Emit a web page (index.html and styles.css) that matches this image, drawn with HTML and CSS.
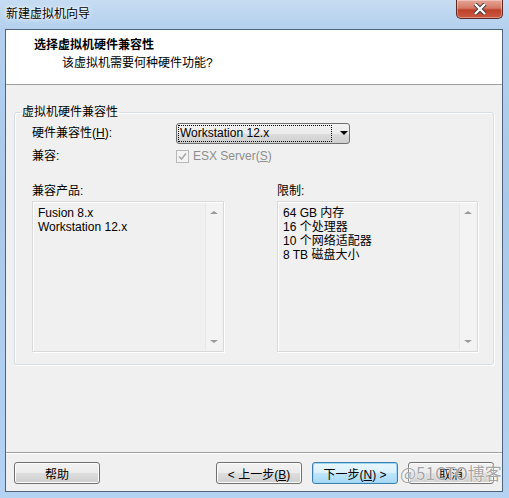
FILE: index.html
```html
<!DOCTYPE html>
<html lang="zh-CN">
<head>
  <meta charset="UTF-8">
  <title>新建虚拟机向导</title>
  <link rel="stylesheet" href="styles.css">
</head>
<body>
  <div class="window">
    <div class="titlebar">
      <span class="title">新建虚拟机向导</span>
      <div class="close">
        <svg width="18" height="12" viewBox="0 0 18 12">
          <path d="M4 1 L14 11 M14 1 L4 11" fill="none" stroke="#3a3a3a" stroke-width="4.2"/>
          <path d="M4 1 L14 11 M14 1 L4 11" fill="none" stroke="#fff" stroke-width="2.4"/>
        </svg>
      </div>
    </div>

    <div class="client">
      <div class="header">
        <div class="head-title">选择虚拟机硬件兼容性</div>
        <div class="head-sub">该虚拟机需要何种硬件功能?</div>
      </div>

      <div class="content">
        <fieldset class="group">
          <legend>虚拟机硬件兼容性</legend>
          <div class="row">
            <span class="label">硬件兼容性(<u>H</u>):</span>
            <div class="combo">
              <span class="combo-text">Workstation 12.x</span>
              <span class="combo-arrow"></span>
            </div>
          </div>
          <div class="row row-check">
            <span class="label">兼容:</span>
            <span class="check">
              <svg width="9" height="9" viewBox="0 0 9 9"><path d="M1 4.5 L3.5 7 L8 1.5" fill="none" stroke="#a9a9a9" stroke-width="1.6"/></svg>
            </span>
            <span class="check-text">ESX Server(<u>S</u>)</span>
          </div>
          <div class="lists">
            <div class="list-col">
              <span class="label">兼容产品:</span>
              <div class="listbox list-left">
                <div class="items">
                  <div>Fusion 8.x</div>
                  <div>Workstation 12.x</div>
                </div>
                <div class="scroll">
                  <span class="arr up"></span>
                  <span class="arr down"></span>
                </div>
              </div>
            </div>
            <div class="list-col">
              <span class="label">限制:</span>
              <div class="listbox list-right">
                <div class="items">
                  <div>64 GB 内存</div>
                  <div>16 个处理器</div>
                  <div>10 个网络适配器</div>
                  <div>8 TB 磁盘大小</div>
                </div>
                <div class="scroll">
                  <span class="arr up"></span>
                  <span class="arr down"></span>
                </div>
              </div>
            </div>
          </div>
        </fieldset>
      </div>

      <div class="footer">
        <button class="btn">帮助</button>
        <span class="spacer"></span>
        <button class="btn">&lt; 上一步(<u>B</u>)</button>
        <button class="btn btn-default">下一步(<u>N</u>) &gt;</button>
        <button class="btn">取消</button>
      </div>
    </div>
    <div class="watermark">@51CTO博客</div>
  </div>
</body>
</html>
```

FILE: styles.css
```css
body {
  margin: 0;
  font-family: "Liberation Sans", "Noto Sans CJK SC", sans-serif;
  font-size: 12px;
  color: #000;
}

.window {
  position: relative;
  width: 509px;
  height: 498px;
  box-sizing: border-box;
  padding: 0 6px 6px 5px;
  display: flex;
  flex-direction: column;
  background: linear-gradient(180deg, #c6dcf2 0%, #b3d0ee 6%, #a9c9ea 40%, #b4d3f2 100%);
}

.titlebar {
  height: 29px;
  display: flex;
  align-items: flex-start;
}
.title {
  margin: 6px 0 0 1px;
  line-height: 16px;
  text-shadow: 0 0 6px #fff, 0 0 3px #fff;
}
.close {
  margin-left: auto;
  width: 45px;
  height: 18px;
  border: 1px solid #5b2a24;
  border-top: none;
  border-radius: 0 0 5px 5px;
  background: linear-gradient(180deg, #e6a596 0%, #d47a66 45%, #c0412b 55%, #c85a3f 100%);
  box-shadow: inset 0 0 0 1px rgba(255,255,255,0.35);
  display: flex;
  align-items: center;
  justify-content: center;
}

.client {
  flex: 1;
  display: flex;
  flex-direction: column;
  background: #f0f0f0;
  border: 1px solid #4f647a;
}

.header {
  height: 55px;
  background: #fff;
  border-bottom: 1px solid #a0a0a0;
  box-sizing: border-box;
  padding: 7px 0 0 28px;
}
.head-title {
  font-weight: bold;
  line-height: 16px;
}
.head-sub {
  margin: 2px 0 0 28px;
  line-height: 16px;
}

.content {
  flex: 1;
  padding: 19px 9px 0 8px;
}

.group {
  margin: 0;
  padding: 2px 15px 12px 17px;
  border: 1px solid #d5dfe5;
  border-radius: 3px;
  box-shadow: inset 1px 1px 0 #fff, 1px 1px 0 #fff;
}
.group legend {
  padding: 0 1px;
  margin-left: -11px;
  line-height: 16px;
}

.row {
  display: flex;
  align-items: center;
  height: 22px;
}
.row-check {
  margin-top: 2px;
  height: 20px;
}
.label {
  width: 144px;
  line-height: 16px;
}

.combo {
  width: 172px;
  height: 19px;
  border: 1px solid #707070;
  border-radius: 3px;
  background: linear-gradient(180deg, #f2f2f2 0%, #ebebeb 50%, #dddddd 51%, #cfcfcf 100%);
  display: flex;
  align-items: center;
  box-sizing: content-box;
}
.combo-text {
  margin-left: 2px;
  width: 152px;
  height: 15px;
  line-height: 15px;
  padding-left: 1px;
  box-sizing: border-box;
  outline: 1px dotted #000;
}
.combo-arrow {
  margin-left: 9px;
  width: 0;
  height: 0;
  border-left: 4px solid transparent;
  border-right: 4px solid transparent;
  border-top: 4px solid #000;
}

.check {
  width: 11px;
  height: 11px;
  border: 1px solid #b8b8b8;
  background: #f4f4f4;
  display: flex;
  align-items: center;
  justify-content: center;
  margin-right: 4px;
}
.check-text {
  color: #8d8d8d;
}

.lists {
  display: flex;
  margin-top: 17px;
  gap: 53px;
}
.list-col {
  display: flex;
  flex-direction: column;
}
.list-col .label {
  margin-bottom: 2px;
}

.listbox {
  display: flex;
  height: 151px;
  border: 1px solid #d9d9d9;
  box-shadow: inset 1px 1px 0 #fff, 1px 1px 0 #fff;
  box-sizing: border-box;
}
.list-left { width: 192px; }
.list-right { width: 201px; }

.items {
  flex: 1;
  padding: 4px 0 0 5px;
  line-height: 14px;
}

.scroll {
  width: 16px;
  margin: 1px 1px 1px 0;
  background: #f3f3f3;
  border-left: 1px solid #e8e8e8;
  display: flex;
  flex-direction: column;
  justify-content: space-between;
  align-items: center;
  padding: 8px 0 7px;
}
.arr {
  width: 0;
  height: 0;
  border-left: 4px solid transparent;
  border-right: 4px solid transparent;
}
.arr.up { border-bottom: 3px solid #9a9a9a; }
.arr.down { border-top: 3px solid #9a9a9a; }

.footer {
  height: 39px;
  border-top: 1px solid #a0a0a0;
  box-shadow: inset 0 1px 0 #fff;
  display: flex;
  align-items: flex-start;
  padding: 9px 8px 0 8px;
  gap: 10px;
  box-sizing: border-box;
}
.spacer { flex: 1; }

.btn {
  width: 86px;
  height: 22px;
  padding: 0;
  font: inherit;
  color: #000;
  border: 1px solid #707070;
  border-radius: 3px;
  background: linear-gradient(180deg, #f2f2f2 0%, #ebebeb 50%, #dddddd 51%, #cfcfcf 100%);
  box-shadow: inset 0 0 0 1px #fcfcfc;
}
.btn-default {
  border-color: #3c7fb1;
  background: linear-gradient(180deg, #eaf6fd 0%, #d9f0fc 50%, #bee6fd 51%, #a7d9f5 100%);
  box-shadow: inset 0 0 0 1px #9ed6f6;
}

.watermark {
  position: absolute;
  left: 400px;
  top: 461px;
  white-space: nowrap;
  font-family: "Noto Sans CJK SC", sans-serif;
  font-size: 17px;
  line-height: 24px;
  color: rgba(125, 125, 125, 0.7);
  text-shadow: 0 0 2px #fff, 0 0 1px #fff;
}
```
